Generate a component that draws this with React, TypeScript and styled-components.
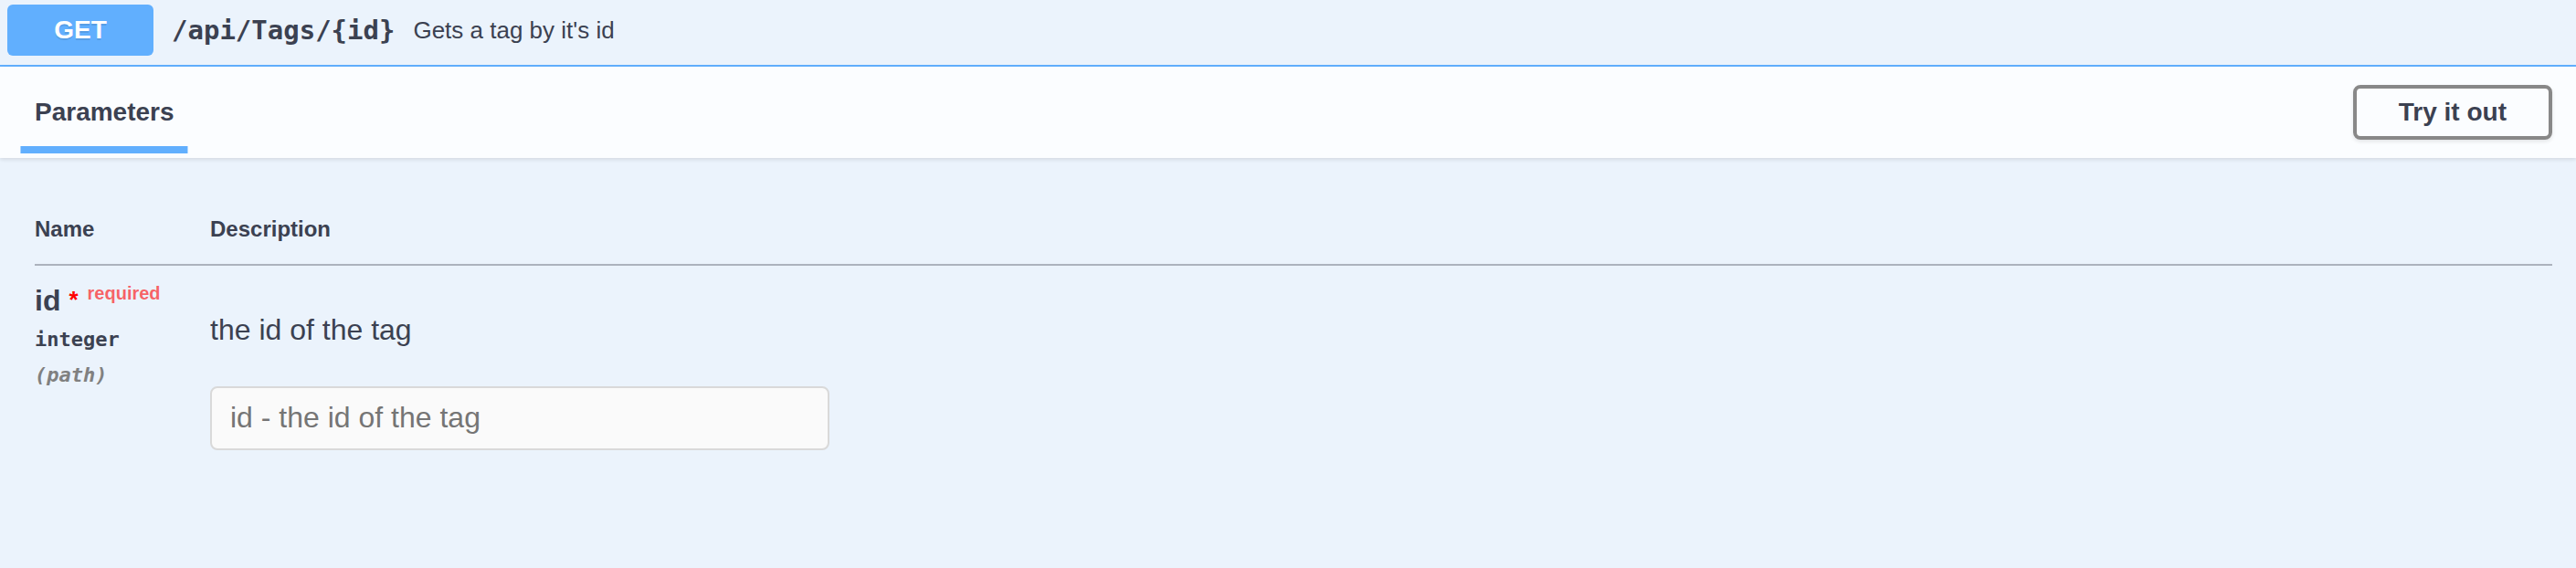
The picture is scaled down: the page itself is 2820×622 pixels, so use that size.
import React from "react";
import styled, { createGlobalStyle } from "styled-components";

const GlobalStyle = createGlobalStyle`
  html, body {
    margin: 0;
    padding: 0;
    background: #ebf3fc;
  }
  body {
    font-family: "Liberation Sans", Arial, sans-serif;
    color: #3b4151;
  }
`;

const Opblock = styled.div`
  width: 2820px;
  min-height: 622px;
  background: #ebf3fc;
`;

const Summary = styled.div`
  display: flex;
  align-items: center;
  padding: 5px 0 10px 8px;
  border-bottom: 2px solid #61affe;
`;

const Method = styled.span`
  min-width: 160px;
  padding: 12px 0;
  box-sizing: border-box;
  text-align: center;
  border-radius: 6px;
  background: #61affe;
  color: #fff;
  font-family: "Liberation Sans", Arial, sans-serif;
  font-size: 28px;
  font-weight: 700;
  line-height: 32px;
  text-shadow: 0 2px 0 rgba(0, 0, 0, 0.1);
`;

const Path = styled.span`
  padding: 0 20px;
  font-family: "DejaVu Sans Mono", "Liberation Mono", monospace;
  font-size: 29px;
  font-weight: 700;
  color: #3b4151;
`;

const SummaryDescription = styled.span`
  font-family: "Liberation Sans", Arial, sans-serif;
  font-size: 26px;
  color: #3b4151;
`;

const SectionHeader = styled.div`
  display: flex;
  align-items: center;
  justify-content: space-between;
  min-height: 100px;
  box-sizing: border-box;
  padding: 16px 26px 16px 38px;
  background: rgba(255, 255, 255, 0.8);
  box-shadow: 0 2px 4px rgba(0, 0, 0, 0.1);
`;

const TabTitle = styled.h4`
  margin: 0;
  font-size: 28px;
  font-weight: 700;
  line-height: 32px;
  color: #3b4151;
`;

const TabLabel = styled.span`
  position: relative;
  &::after {
    content: "";
    position: absolute;
    left: 50%;
    bottom: -30px;
    width: 120%;
    height: 8px;
    transform: translateX(-50%);
    background: #61affe;
  }
`;

const TryButton = styled.button`
  padding: 10px 46px;
  border: 4px solid #888888;
  border-radius: 8px;
  background: transparent;
  box-shadow: 0 2px 4px rgba(0, 0, 0, 0.1);
  font-family: "Liberation Sans", Arial, sans-serif;
  font-size: 28px;
  font-weight: 700;
  line-height: 32px;
  color: #3b4151;
  cursor: pointer;
`;

const TableContainer = styled.div`
  padding: 40px 26px 40px 38px;
`;

const ParamTable = styled.table`
  width: 100%;
  border-collapse: collapse;
  border-spacing: 0;
`;

const HeaderCell = styled.th<{ $width?: number }>`
  width: ${(p) => (p.$width ? `${p.$width}px` : "auto")};
  padding: 24px 0;
  text-align: left;
  font-size: 24px;
  font-weight: 700;
  line-height: 27.6px;
  color: #3b4151;
  border-bottom: 2px solid rgba(59, 65, 81, 0.2);
`;

const Cell = styled.td`
  padding: 20px 0 0 0;
  vertical-align: top;
`;

const NameLine = styled.div`
  font-size: 32px;
  font-weight: 700;
  line-height: 36px;
  color: #3b4151;
  white-space: nowrap;
`;

const Star = styled.span`
  margin-left: 9px;
  font-size: 26px;
  font-weight: 700;
  line-height: 0;
  color: red;
  vertical-align: 3px;
`;

const Required = styled.span`
  margin-left: 10px;
  font-family: "Liberation Sans", Arial, sans-serif;
  font-size: 20px;
  font-weight: 700;
  line-height: 0;
  color: rgba(255, 0, 0, 0.6);
  vertical-align: 12px;
`;

const TypeLine = styled.div`
  padding: 12px 0 0;
  font-family: "DejaVu Sans Mono", "Liberation Mono", monospace;
  font-size: 22px;
  font-weight: 700;
  line-height: 26px;
  color: #3b4151;
`;

const InLine = styled.div`
  padding: 13px 0 0;
  font-family: "DejaVu Sans Mono", "Liberation Mono", monospace;
  font-size: 22px;
  font-weight: 700;
  font-style: italic;
  line-height: 26px;
  color: #808080;
`;

const DescText = styled.p`
  margin: 32px 0 44px;
  font-size: 32px;
  line-height: 36px;
  color: #3b4151;
`;

const TextInput = styled.input`
  display: block;
  width: 678px;
  height: 70px;
  box-sizing: border-box;
  margin: 0;
  padding: 0 20px;
  border: 2px solid #d9d9d9;
  border-radius: 8px;
  background: #fafafa;
  font-family: "Liberation Sans", Arial, sans-serif;
  font-size: 32px;
  color: #3b4151;
  outline: none;
  &::placeholder {
    color: #757575;
  }
`;

export default function App() {
  return (
    <>
      <GlobalStyle />
      <Opblock>
        <Summary>
          <Method>GET</Method>
          <Path>/api/Tags/&#123;id&#125;</Path>
          <SummaryDescription>Gets a tag by it's id</SummaryDescription>
        </Summary>
        <SectionHeader>
          <TabTitle>
            <TabLabel>Parameters</TabLabel>
          </TabTitle>
          <TryButton>Try it out</TryButton>
        </SectionHeader>
        <TableContainer>
          <ParamTable>
            <thead>
              <tr>
                <HeaderCell $width={192}>Name</HeaderCell>
                <HeaderCell>Description</HeaderCell>
              </tr>
            </thead>
            <tbody>
              <tr>
                <Cell>
                  <NameLine>
                    id<Star>*</Star>
                    <Required>required</Required>
                  </NameLine>
                  <TypeLine>integer</TypeLine>
                  <InLine>(path)</InLine>
                </Cell>
                <Cell>
                  <DescText>the id of the tag</DescText>
                  <TextInput type="text" placeholder="id - the id of the tag" />
                </Cell>
              </tr>
            </tbody>
          </ParamTable>
        </TableContainer>
      </Opblock>
    </>
  );
}
